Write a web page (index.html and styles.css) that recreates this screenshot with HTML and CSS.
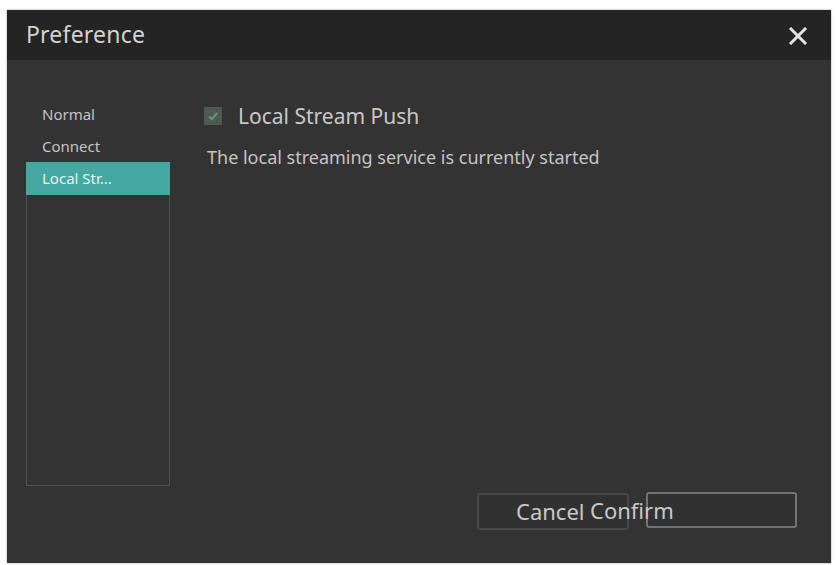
FILE: index.html
```html
<!DOCTYPE html>
<html lang="en">
<head>
<meta charset="utf-8">
<title>Preference</title>
<link rel="stylesheet" href="styles.css">
</head>
<body>
<div class="dialog">
  <div class="titlebar">
    <span class="title">Preference</span>
    <button class="close" aria-label="Close">
      <svg width="18" height="18" viewBox="0 0 18 18"><path d="M2 2L16 16M16 2L2 16" stroke="#e4e4e4" stroke-width="3" stroke-linecap="square"/></svg>
    </button>
  </div>
  <div class="content">
    <nav class="sidebar">
      <div class="nav-item">Normal</div>
      <div class="nav-item">Connect</div>
      <div class="nav-box">
        <div class="nav-item active">Local Str...</div>
      </div>
    </nav>
    <main class="main">
      <label class="check-row">
        <span class="checkbox">
          <svg width="12" height="12" viewBox="0 0 12 12"><path d="M2 6.5L5 9L10 3" fill="none" stroke="#6f8f80" stroke-width="2"/></svg>
        </span>
        <span class="check-label">Local Stream Push</span>
      </label>
      <p class="desc">The local streaming service is currently started</p>
      <div class="footer">
        <button class="btn btn-cancel">Cancel</button>
        <button class="btn btn-confirm"><span class="confirm-text">Confirm</span></button>
      </div>
    </main>
  </div>
</div>
</body>
</html>
```

FILE: styles.css
```css
html, body {
  margin: 0;
  background: #ffffff;
}
body {
  padding: 10px 6px 2px 7px;
  height: 565px;
  box-sizing: border-box;
  font-family: "Noto Sans", "Open Sans", sans-serif;
}
.dialog {
  height: 553px;
  background: #333333;
  display: flex;
  flex-direction: column;
  box-shadow: 0 0 2px rgba(0,0,0,0.4);
}
.titlebar {
  height: 50px;
  background: #242424;
  display: flex;
  align-items: center;
  justify-content: space-between;
  padding: 0 24px 0 19px;
}
.title {
  color: #d2d2d2;
  font-size: 23px;
  letter-spacing: 0.2px;
  margin-top: -3px;
}
.close {
  background: none;
  border: none;
  padding: 0;
  display: flex;
  margin-top: 2px;
}
.content {
  flex: 1;
  display: flex;
  padding: 38px 34px 33px 19px;
}
.sidebar {
  width: 144px;
  display: flex;
  flex-direction: column;
  margin-bottom: 44px;
}
.nav-item {
  height: 32px;
  line-height: 32px;
  padding-left: 16px;
  color: #c4c4c4;
  font-size: 15px;
}
.nav-box {
  flex: 1;
  border: 1px solid #505050;
  border-top: none;
}
.nav-item.active {
  background: #44a8a1;
  color: #e4f2f0;
  margin: 0 -1px;
  height: 33px;
  line-height: 33px;
  padding-left: 16px;
}
.main {
  flex: 1;
  display: flex;
  flex-direction: column;
  padding-left: 34px;
  padding-top: 1px;
}
.check-row {
  display: flex;
  align-items: center;
  gap: 16px;
  height: 34px;
}
.checkbox {
  width: 18px;
  height: 18px;
  background: #4d5a53;
  display: flex;
  align-items: center;
  justify-content: center;
  border-radius: 1px;
}
.check-label {
  color: #c8c8c8;
  font-size: 21px;
}
.desc {
  margin: 12px 0 0 3px;
  color: #c4c4c4;
  font-size: 18px;
}
.footer {
  margin-top: auto;
  display: flex;
  justify-content: flex-end;
  align-items: flex-start;
  gap: 17px;
}
.btn {
  width: 152px;
  height: 37px;
  background: #313131;
  border: 2px solid #474747;
  border-radius: 3px;
  color: #c8c8c8;
  font-family: "Noto Sans", "Open Sans", sans-serif;
  font-size: 22px;
  padding: 0;
  white-space: nowrap;
}
.btn-cancel {
  text-align: left;
  padding-left: 37px;
  padding-bottom: 2px;
}
.btn-confirm {
  width: 151px;
  height: 36px;
  margin-top: -1px;
  border-color: #737373;
  text-align: left;
  overflow: visible;
}
.confirm-text {
  margin-left: -58px;
}
```
